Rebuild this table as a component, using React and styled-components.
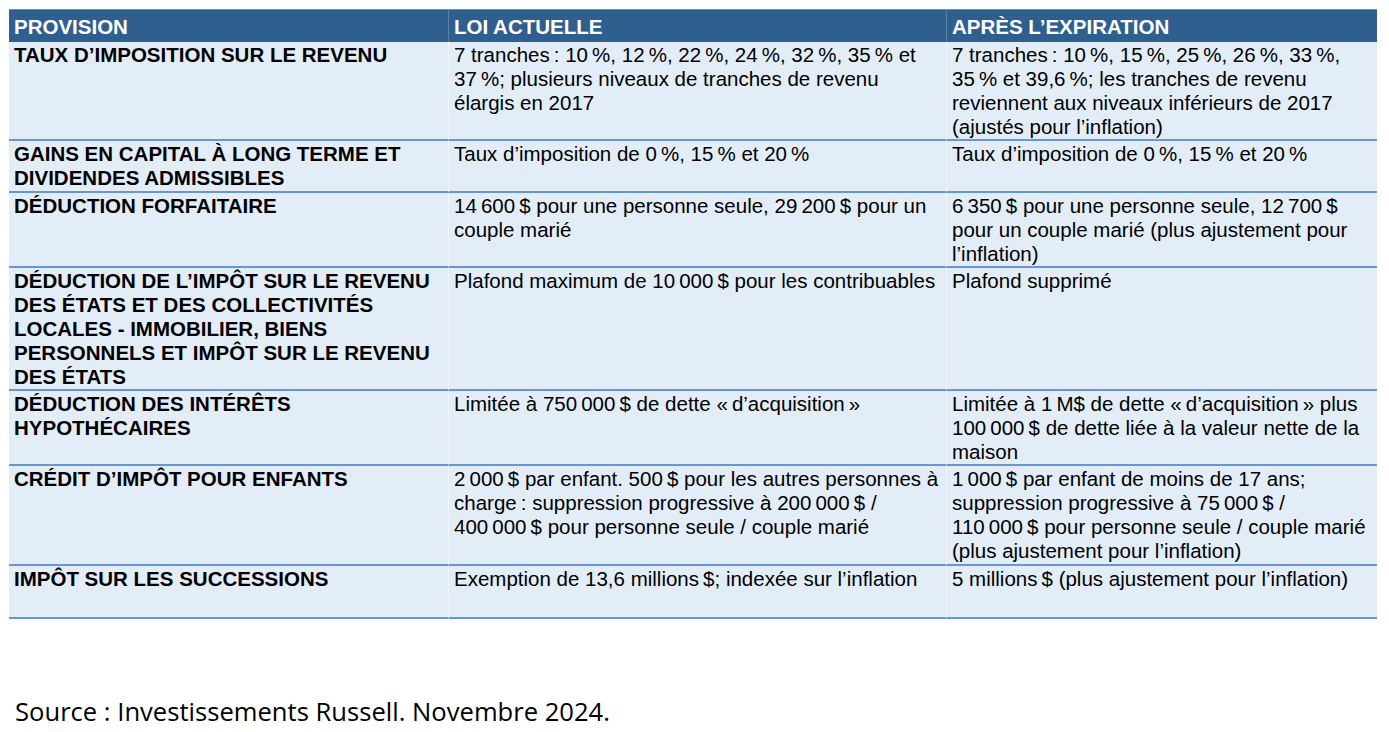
import React from "react";
import styled, { createGlobalStyle } from "styled-components";

const Global = createGlobalStyle`
  html, body { margin: 0; padding: 0; background: #ffffff; }
  body { font-family: "Liberation Sans", Arial, sans-serif; }
`;

const Page = styled.div`
  width: 1389px;
  height: 732px;
  padding: 9px 12px 0 9px;
  box-sizing: border-box;
  display: flex;
  flex-direction: column;
`;

const Table = styled.div`
  width: 1368px;
  display: grid;
  grid-template-columns: 439px 498px 431px;
  background: #e3edf7;
`;

const HeadCell = styled.div`
  background: #2f5f8f;
  color: #ffffff;
  font-weight: 700;
  font-size: 20.5px;
  height: 33px;
  line-height: 34px;
  padding-left: 5px;
  border-top: 1px solid #6f8fb0;
  border-left: ${(p) => (p.$first ? "none" : "1px solid #5b7fa5")};
  box-sizing: border-box;
  white-space: nowrap;
`;

const Cell = styled.div`
  color: #000000;
  font-size: 20.5px;
  line-height: 24px;
  font-weight: ${(p) => (p.$bold ? 700 : 400)};
  padding: 1px 4px 0 5px;
  min-height: ${(p) => p.$min || 0}px;
  border-bottom: 2px solid #6896d2;
  border-left: ${(p) => (p.$first ? "none" : "1px solid #eef4fa")};
  box-sizing: border-box;
`;

const Source = styled.div`
  margin-top: 75px;
  margin-left: 6px;
  font-family: "Open Sans", sans-serif;
  font-size: 25.6px;
  color: #000;
`;

const n = "\u202F";

const rows = [
  {
    h: 98,
    a: "TAUX D\u2019IMPOSITION SUR LE REVENU",
    b: `7 tranches${n}: 10${n}%, 12${n}%, 22${n}%, 24${n}%, 32${n}%, 35${n}% et 37${n}%; plusieurs niveaux de tranches de revenu élargis en 2017`,
    c: `7 tranches${n}: 10${n}%, 15${n}%, 25${n}%, 26${n}%, 33${n}%, 35${n}% et 39,6${n}%; les tranches de revenu reviennent aux niveaux inférieurs de 2017 (ajustés pour l\u2019inflation)`,
  },
  {
    h: 52,
    a: "GAINS EN CAPITAL À LONG TERME ET DIVIDENDES ADMISSIBLES",
    b: `Taux d\u2019imposition de 0${n}%, 15${n}% et 20${n}%`,
    c: `Taux d\u2019imposition de 0${n}%, 15${n}% et 20${n}%`,
  },
  {
    h: 75,
    a: "DÉDUCTION FORFAITAIRE",
    b: `14${n}600${n}$ pour une personne seule, 29${n}200${n}$ pour un couple marié`,
    c: `6${n}350${n}$ pour une personne seule, 12${n}700${n}$ pour un couple marié (plus ajustement pour l\u2019inflation)`,
  },
  {
    h: 123,
    a: "DÉDUCTION DE L\u2019IMPÔT SUR LE REVENU DES ÉTATS ET DES COLLECTIVITÉS LOCALES - IMMOBILIER, BIENS PERSONNELS ET IMPÔT SUR LE REVENU DES ÉTATS",
    b: `Plafond maximum de 10${n}000${n}$ pour les contribuables`,
    c: "Plafond supprimé",
  },
  {
    h: 75,
    a: "DÉDUCTION DES INTÉRÊTS HYPOTHÉCAIRES",
    b: `Limitée à 750${n}000${n}$ de dette «${n}d\u2019acquisition${n}»`,
    c: `Limitée à 1${n}M$ de dette «${n}d\u2019acquisition${n}» plus 100${n}000${n}$ de dette liée à la valeur nette de la maison`,
  },
  {
    h: 100,
    a: "CRÉDIT D\u2019IMPÔT POUR ENFANTS",
    b: `2${n}000${n}$ par enfant. 500${n}$ pour les autres personnes à charge${n}: suppression progressive à 200${n}000${n}$ / 400${n}000${n}$ pour personne seule / couple marié`,
    c: `1${n}000${n}$ par enfant de moins de 17 ans; suppression progressive à 75${n}000${n}$ / 110${n}000${n}$ pour personne seule / couple marié (plus ajustement pour l\u2019inflation)`,
  },
  {
    h: 53,
    a: "IMPÔT SUR LES SUCCESSIONS",
    b: `Exemption de 13,6 millions${n}$; indexée sur l\u2019inflation`,
    c: `5 millions${n}$ (plus ajustement pour l\u2019inflation)`,
  },
];

export default function App() {
  return (
    <>
      <Global />
      <Page>
        <Table>
          <HeadCell $first>PROVISION</HeadCell>
          <HeadCell>LOI ACTUELLE</HeadCell>
          <HeadCell>{"APRÈS L\u2019EXPIRATION"}</HeadCell>
          {rows.map((r, i) => (
            <React.Fragment key={i}>
              <Cell $first $bold $min={r.h}>{r.a}</Cell>
              <Cell $min={r.h}>{r.b}</Cell>
              <Cell $min={r.h}>{r.c}</Cell>
            </React.Fragment>
          ))}
        </Table>
        <Source>Source : Investissements Russell. Novembre 2024.</Source>
      </Page>
    </>
  );
}
